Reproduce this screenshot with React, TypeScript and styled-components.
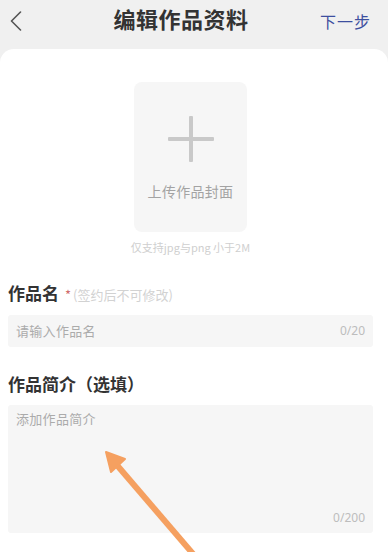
import React from "react";
import styled, { createGlobalStyle } from "styled-components";

const GlobalStyle = createGlobalStyle`
  html, body {
    margin: 0;
    padding: 0;
    background: #f0f0f0;
    font-family: "Noto Sans CJK SC", "Noto Sans", sans-serif;
  }
  * { box-sizing: border-box; }
`;

const Page = styled.div`
  position: relative;
  width: 388px;
  height: 552px;
  overflow: hidden;
  background: #f0f0f0;
  display: flex;
  flex-direction: column;
`;

const Header = styled.div`
  height: 49px;
  flex-shrink: 0;
  display: flex;
  align-items: center;
  justify-content: space-between;
  padding: 0 17px 0 9px;
  position: relative;
`;

const BackButton = styled.button`
  width: 14px;
  height: 22px;
  padding: 0;
  margin-top: -8px;
  border: none;
  background: none;
  display: flex;
  align-items: center;
  justify-content: center;
`;

const Title = styled.h1`
  position: absolute;
  left: 0;
  right: 26px;
  top: 4px;
  margin: 0;
  text-align: center;
  font-size: 22px;
  line-height: 28px;
  font-weight: 700;
  color: #333;
  letter-spacing: 0.5px;
  pointer-events: none;
`;

const NextLink = styled.span`
  font-size: 16px;
  line-height: 22px;
  margin-top: -8px;
  color: #3d4f9f;
  letter-spacing: 1px;
`;

const Card = styled.div`
  flex: 1;
  background: #fff;
  border-radius: 14px 14px 0 0;
  padding: 33px 15px 0 8px;
  display: flex;
  flex-direction: column;
`;

const UploadArea = styled.div`
  display: flex;
  flex-direction: column;
  align-items: center;
`;

const UploadBox = styled.div`
  width: 113px;
  height: 150px;
  border-radius: 8px;
  background: #f6f6f6;
  display: flex;
  flex-direction: column;
  align-items: center;
  padding-top: 34px;
`;

const UploadText = styled.span`
  margin-top: 20px;
  font-size: 14px;
  line-height: 18px;
  color: #a3a3a3;
  letter-spacing: 0.3px;
`;

const Hint = styled.span`
  margin-top: 8px;
  font-size: 11px;
  line-height: 14px;
  color: #cfcfcf;
`;

const Label = styled.div<{ $top: number }>`
  margin-top: ${(p) => p.$top}px;
  display: flex;
  align-items: baseline;
  font-size: 17px;
  line-height: 24px;
  font-weight: 600;
  color: #333;
`;

const Required = styled.span`
  color: #cf6b6b;
  font-size: 13px;
  margin-left: 6px;
  font-weight: 400;
`;

const Note = styled.span`
  margin-left: 2px;
  font-size: 13px;
  font-weight: 400;
  color: #d2d2d2;
`;

const InputBox = styled.div`
  margin-top: 8px;
  height: 32px;
  background: #f6f6f6;
  border-radius: 3px;
  display: flex;
  align-items: center;
  justify-content: space-between;
  padding: 0 8px;
`;

const Placeholder = styled.span`
  font-size: 13px;
  line-height: 18px;
  color: #ababab;
  letter-spacing: 0.3px;
`;

const Counter = styled.span`
  font-size: 12px;
  line-height: 16px;
  color: #bdbdbd;
  font-family: "Noto Sans", sans-serif;
`;

const TextAreaBox = styled.div`
  margin-top: 9px;
  height: 128px;
  background: #f6f6f6;
  border-radius: 3px;
  display: flex;
  flex-direction: column;
  justify-content: space-between;
  padding: 5px 8px 7px 8px;
`;

const CounterRow = styled.div`
  display: flex;
  justify-content: flex-end;
`;

const ArrowOverlay = styled.svg`
  position: absolute;
  left: 0;
  top: 0;
  pointer-events: none;
`;

export default function App() {
  return (
    <>
      <GlobalStyle />
      <Page>
        <Header>
          <BackButton aria-label="返回">
            <svg width="12" height="20" viewBox="0 0 12 20">
              <path d="M10.5 1 L1.5 10 L10.5 19" fill="none" stroke="#555" strokeWidth="1.6" strokeLinecap="round" strokeLinejoin="round" />
            </svg>
          </BackButton>
          <Title>编辑作品资料</Title>
          <NextLink>下一步</NextLink>
        </Header>
        <Card>
          <UploadArea>
            <UploadBox>
              <svg width="46" height="46" viewBox="0 0 46 46">
                <rect x="21" y="0" width="4" height="46" rx="1" fill="#c9c9c9" />
                <rect x="0" y="21" width="46" height="4" rx="1" fill="#c9c9c9" />
              </svg>
              <UploadText>上传作品封面</UploadText>
            </UploadBox>
            <Hint>仅支持jpg与png 小于2M</Hint>
          </UploadArea>

          <Label $top={27}>
            作品名<Required>*</Required>
            <Note>(签约后不可修改)</Note>
          </Label>
          <InputBox>
            <Placeholder>请输入作品名</Placeholder>
            <Counter>0/20</Counter>
          </InputBox>

          <Label $top={25}>作品简介（选填）</Label>
          <TextAreaBox>
            <Placeholder>添加作品简介</Placeholder>
            <CounterRow>
              <Counter>0/200</Counter>
            </CounterRow>
          </TextAreaBox>
        </Card>
        <ArrowOverlay width="388" height="552" viewBox="0 0 388 552">
          <line x1="116" y1="464" x2="200" y2="562" stroke="#f5a060" strokeWidth="6" />
          <polygon points="106,452 125,459 111,472" fill="#f5a060" stroke="#f5a060" strokeWidth="2" strokeLinejoin="round" />
        </ArrowOverlay>
      </Page>
    </>
  );
}
